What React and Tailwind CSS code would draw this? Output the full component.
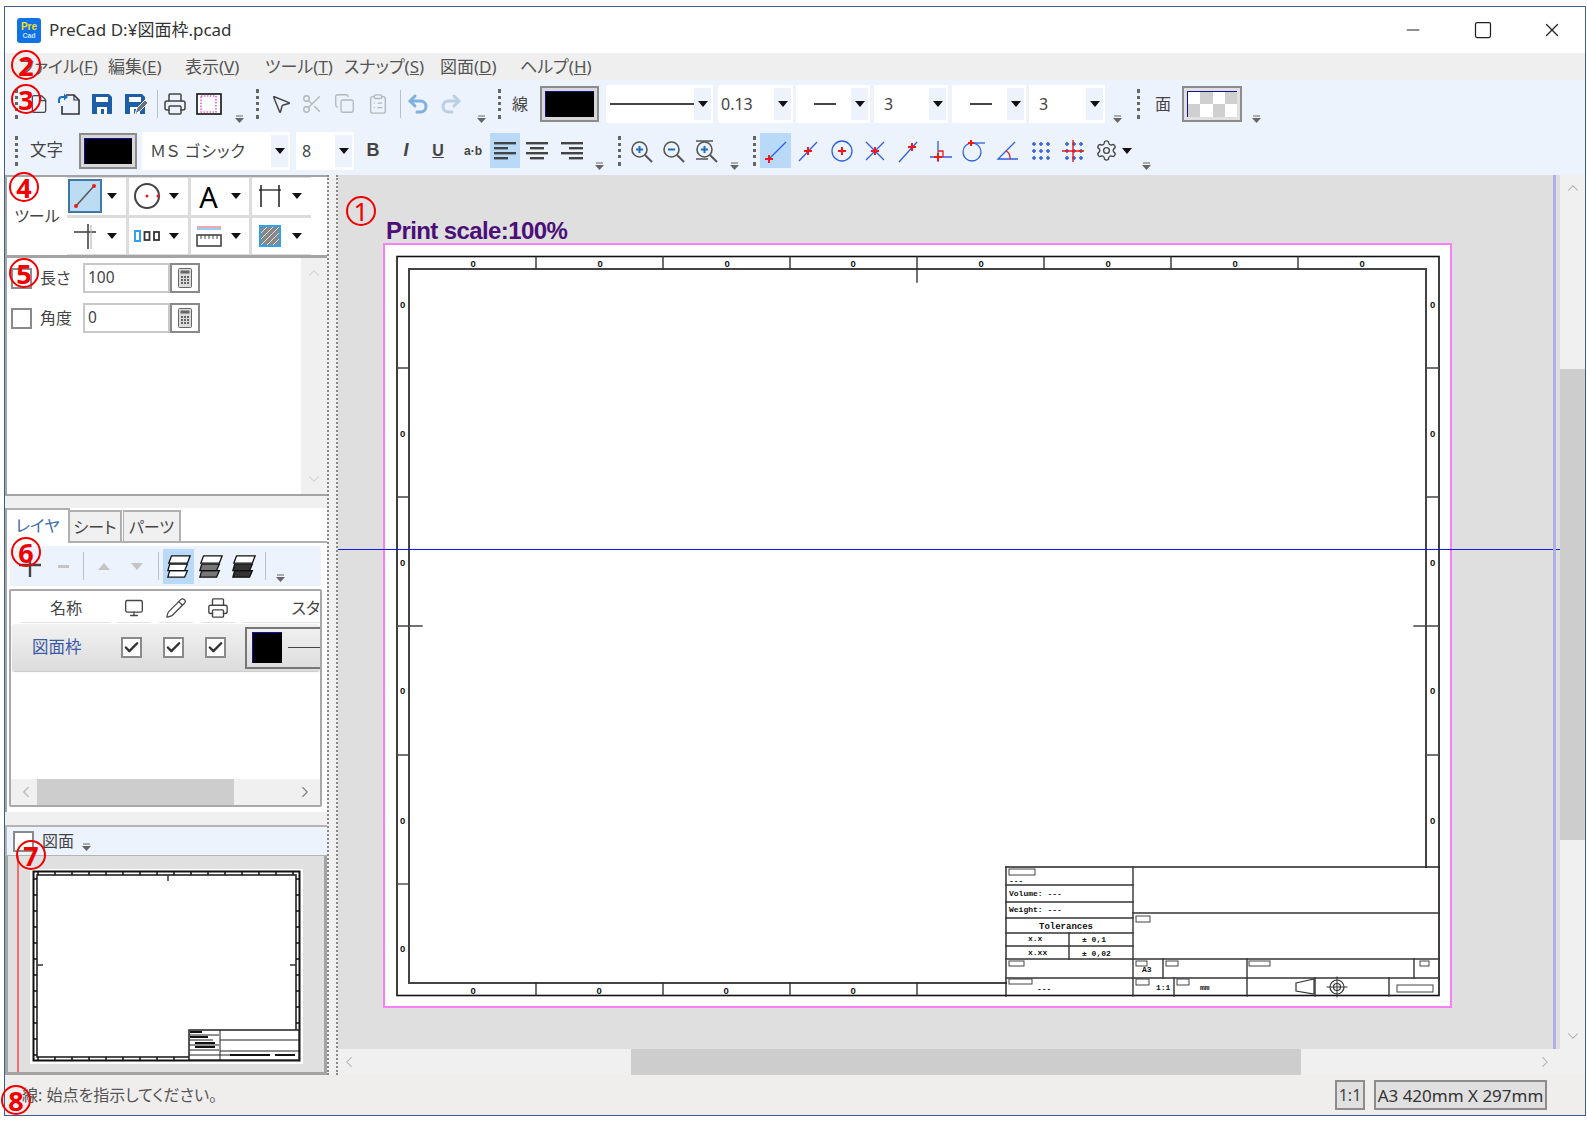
import React from 'react';
import { Printer, Scissors, Copy, ClipboardList, Undo2, Redo2, Settings, Pencil, Monitor, Check, ChevronUp, ChevronDown, ChevronLeft, ChevronRight, MousePointer2, File, X, Minus, Square } from 'lucide-react';

const Grip = ({ className = 'w-[18px]' }) => (
  <div className={`flex h-full items-center justify-center ${className}`}>
    <div className="h-[30px] border-l-[3px] border-dotted border-[#666]" />
  </div>
);

const Sep = ({ className = 'w-[10px]' }) => (
  <div className={`flex h-full items-center justify-center ${className}`}>
    <div className="h-[28px] w-px bg-[#b8c0c8]" />
  </div>
);

// the little "more" handle at the end of each toolbar
const Over = ({ className = 'w-[18px]' }) => (
  <div className={`flex h-full items-end justify-center pb-[4px] ${className}`}>
    <svg width="9" height="8" viewBox="0 0 9 8">
      <path d="M1 1h7" stroke="#666" />
      <path d="M0 3h9L4.5 8z" fill="#666" />
    </svg>
  </div>
);

const Tri = ({ className = '' }) => (
  <svg width="10" height="6" viewBox="0 0 10 6" className={className}>
    <path d="M0 0h10L5 6z" fill="#111" />
  </svg>
);

const Cell = ({ className = 'w-[33px]', children, active }) => (
  <div className={`flex h-full items-center justify-center ${className}`}>
    {active ? <div className="flex h-[35px] w-full items-center justify-center bg-[#b8daf8]">{children}</div> : children}
  </div>
);

const Swatch = ({ className = '', children }) => (
  <div className={`h-[36px] border-2 border-[#8c8c8c] bg-[#d8d8d8] p-[3px] ${className}`}>
    <div className="h-full w-full border-l border-t border-[#1010a0] bg-black">{children}</div>
  </div>
);

const Combo = ({ className = '', children }) => (
  <div className={`flex h-[38px] items-center bg-white pl-[3px] pr-[2px] ${className}`}>
    <div className="min-w-0 flex-1 overflow-hidden whitespace-nowrap text-[16px] leading-[22px] text-[#444]">{children}</div>
    <div className="flex h-[32px] w-[17px] shrink-0 items-center justify-center bg-[#ecf3fc]"><Tri /></div>
  </div>
);

const Dash = ({ w = 'w-[22px]' }) => <div className={`mx-auto h-[2px] bg-[#444] ${w}`} />;

const OpenIcon = () => (
  <svg width="26" height="24" viewBox="0 0 26 24" fill="none">
    <path d="M10 3h8l5 5v14H6v-8" stroke="#333" strokeWidth="1.6" />
    <path d="M18 3v5h5" stroke="#333" strokeWidth="1.2" />
    <path d="M3 11V8a3 3 0 0 1 3-3h4" stroke="#1c6fc0" strokeWidth="2" />
    <path d="M8 1.5l4 3.500-4 3.500z" fill="#1c6fc0" />
  </svg>
);

const FloppyIcon = ({ pen }) => (
  <svg width="24" height="24" viewBox="0 0 24 24">
    <path d="M2 2h17l3 3v17H2z" fill="#1c5fa6" />
    <rect x="6" y="5" width="12" height="5" fill="#fff" />
    <rect x="7" y="15" width="10" height="7" fill="#fff" />
    <rect x="11" y="17" width="3" height="5" fill="#1c5fa6" />
    {pen && <path d="M12 22l2-6 8-8 3 3-8 8z" fill="#6a7280" stroke="#fff" strokeWidth="1" />}
  </svg>
);

const PrintAreaIcon = () => (
  <svg width="26" height="22" viewBox="0 0 26 22">
    <rect x="1" y="1" width="24" height="20" fill="#fff" stroke="#111" strokeWidth="1.6" />
    <rect x="5" y="3" width="15" height="16" fill="none" stroke="#f020d0" strokeWidth="1.2" strokeDasharray="1.5 1.5" />
  </svg>
);

const AlignIcon = ({ mode }) => {
  const rows = [[22, 3], [14, 8], [22, 13], [14, 18]];
  return (
    <svg width="22" height="22" viewBox="0 0 22 22">
      {rows.map(([w, y]) => {
        const x = mode === 'left' ? 0 : mode === 'right' ? 22 - w : (22 - w) / 2;
        return <rect key={y} x={x} y={y - 1} width={w} height="2.4" fill="#444" />;
      })}
    </svg>
  );
};

const ZoomIcon = ({ plus, fit }) => (
  <svg width="24" height="24" viewBox="0 0 24 24" fill="none" stroke="#555" strokeWidth="1.6">
    {fit && <path d="M2 2h17M2 20h12" />}
    <circle cx="10.500" cy="10.500" r="7.500" />
    <path d={plus ? 'M10.500 7v7M7 10.500h7' : 'M7 10.500h7'} stroke="#1c6fc0" strokeWidth="2" />
    <path d="M16 16l7 7" strokeWidth="2" />
  </svg>
);

const B = '#2f5fe0';
const R = '#f01818';
const RedCross = ({ x, y, s = 4 }) => <path d={`M${x - s} ${y}h${s * 2}M${x} ${y - s}v${s * 2}`} stroke={R} strokeWidth="2" />;

const Snap = ({ children }) => (
  <svg width="24" height="26" viewBox="0 0 24 26" fill="none" stroke={B} strokeWidth="1.3">{children}</svg>
);

const dots = [3, 10, 17];
const SnapDots = ({ cross }) => (
  <Snap>
    {dots.map((x) => dots.map((y) => <path key={`${x}-${y}`} d={`M${x + 1} ${y + 3}h4M${x + 3} ${y + 1}v4`} strokeWidth="1.5" stroke={B} />))}
    {cross && <path d="M1 13h22M12 2v22" stroke={R} strokeWidth="1.4" />}
  </Snap>
);

const snapIcons = [
  <Snap key="mid"><path d="M3 23L21 4" /><RedCross x={12} y={13} /></Snap>,
  <Snap key="cen"><circle cx="12" cy="13" r="10" /><RedCross x={12} y={13} /></Snap>,
  <Snap key="int"><path d="M3 4l18 18M21 4L3 22" /><RedCross x={12} y={13} /></Snap>,
  <Snap key="near"><path d="M3 24L21 4" /><RedCross x={16} y={9} /></Snap>,
  <Snap key="perp"><path d="M9 3v21M1 19h22" /><path d="M9 13h5v6" stroke={R} /><RedCross x={9} y={19} /></Snap>,
  <Snap key="tan"><circle cx="10" cy="14" r="9" /><path d="M8 5h15" /><RedCross x={9} y={5} s={3} /></Snap>,
  <Snap key="ang"><path d="M20 4L3 21h20" /><path d="M11 13a8 8 0 0 1 4 8" stroke={R} /></Snap>,
];

const LayerIcon = ({ a, b, c }) => (
  <svg width="26" height="28" viewBox="0 0 28 28" stroke="#111" strokeWidth="1.4">
    <path d="M4 19h19l-3 7H2z" fill={c} />
    <path d="M4 12h19l-3 7H2z" fill={b} />
    <path d="M6 3h20l-3 8H3z" fill={a} />
  </svg>
);

const CalcIcon = () => (
  <svg width="14" height="20" viewBox="0 0 14 20">
    <rect x="0.5" y="0.5" width="13" height="19" rx="1" fill="#dcdcdc" stroke="#666" />
    <rect x="2.5" y="2.5" width="9" height="3" fill="#666" />
    {[8, 11, 14].map((y) => [3, 6, 9].map((x) => <rect key={`${x}-${y}`} x={x} y={y} width="2" height="2" fill="#666" />))}
  </svg>
);

const Checkbox = ({ checked, className = '' }) => (
  <div className={`flex h-[21px] w-[21px] shrink-0 items-center justify-center border-2 border-[#8a8a8a] bg-white ${className}`}>
    {checked && <Check size={17} strokeWidth={3.4} className="text-[#333]" />}
  </div>
);

const Thumb = ({ className = '' }) => <div className={`bg-[#cdcdcd] ${className}`} />;

const ToolCell = ({ icon }) => (
  <div className="flex items-center bg-white">
    <div className="flex h-full w-[36px] items-center justify-center">{icon}</div>
    <Tri className="ml-[4px]" />
  </div>
);

const toolIcons = [
  <div key="line" className="flex h-[34px] w-[34px] shrink-0 items-center justify-center border-2 border-[#3f78a8] bg-[#bcdcf4]">
    <svg width="26" height="26" viewBox="0 0 26 26"><path d="M4 23L22 3" stroke="#555" strokeWidth="1.5" /><circle cx="4" cy="23" r="2" fill={R} /><circle cx="22" cy="3" r="2" fill={R} /></svg>
  </div>,
  <svg key="circ" width="28" height="28" viewBox="0 0 28 28" fill="none"><circle cx="14" cy="14" r="12" stroke="#444" strokeWidth="2" /><circle cx="14" cy="14" r="1.5" fill={R} /><circle cx="25" cy="14" r="1.5" fill={R} /></svg>,
  <span key="a" className="text-[29px] leading-none text-black">A</span>,
  <svg key="dim" width="26" height="26" viewBox="0 0 26 26" fill="none" stroke="#555" strokeWidth="2"><path d="M4 2v22M22 2v22" /><path d="M2 7h22" stroke="#222" strokeWidth="1.3" /></svg>,
  <svg key="lead" width="26" height="26" viewBox="0 0 26 26" fill="none" stroke="#444"><path d="M2 9h22" strokeWidth="1.6" /><path d="M16 1v25" strokeWidth="1.6" /><path d="M19 2v24" stroke="#aaa" /></svg>,
  <svg key="num" width="26" height="14" viewBox="0 0 26 14"><rect x="1" y="2" width="5" height="10" fill="#fff" stroke="#30a0f0" strokeWidth="2" /><rect x="10.500" y="3" width="5" height="8" fill="#fff" stroke="#333" strokeWidth="1.800" /><rect x="20" y="3" width="5" height="8" fill="#fff" stroke="#333" strokeWidth="1.800" /></svg>,
  <svg key="rule" width="26" height="22" viewBox="0 0 26 22" fill="none"><path d="M1 2h24" stroke="#e05060" /><path d="M1 4h24" stroke="#3098e8" /><rect x="1" y="10" width="24" height="11" stroke="#444" strokeWidth="1.6" /><path d="M5 10v4M9 10v4M13 10v4M17 10v4M21 10v4" stroke="#444" /></svg>,
  <svg key="hatch" width="22" height="22" viewBox="0 0 22 22"><rect x="1" y="1" width="20" height="20" fill="#888" stroke="#30a0f0" strokeWidth="2" /><path d="M2 8l6-6M2 14L14 2M2 20L20 2M8 20L20 8M14 20l6-6" stroke="#ddd" /></svg>,
];

// --- drawing sheet, in page coordinates ---
const topTicks = [536, 663, 790, 917, 1044, 1171, 1298];
const topZeros = [473, 600, 727, 853, 981, 1108, 1235, 1362];
const sideTicks = [368, 497, 626, 755, 884];
const sideZeros = [304, 433, 562, 690, 820, 948];
const bottomTicks = [536, 663, 790, 917];
const bottomZeros = [473, 599, 726, 853];

const tiny = { fontFamily: '"Liberation Mono",monospace', fontWeight: 700, fontSize: 8, fill: '#111' };
const zero = { fontFamily: '"Liberation Sans",sans-serif', fontWeight: 700, fontSize: 9.5, fill: '#111' };
const tol = { ...tiny, fontSize: 9 };

const hLines = [
  [1006, 885, 1133], [1006, 902, 1133], [1006, 918, 1133], [1006, 933, 1133], [1006, 946, 1133],
  [1133, 913, 1439], [1006, 959, 1439], [1006, 978, 1439],
];
const vLines = [
  [1133, 867, 996], [1069, 933, 959], [1163, 959, 978], [1247, 959, 996], [1414, 959, 978],
  [1174, 978, 996], [1315, 978, 996], [1389, 978, 996],
];
const smallRects = [
  [1009, 869, 26, 6], [1136, 916, 14, 6], [1009, 961, 15, 5], [1136, 961, 11, 5], [1166, 961, 12, 5],
  [1249, 961, 21, 5], [1420, 961, 9, 5], [1009, 979, 23, 5], [1136, 979, 13, 6], [1177, 979, 12, 6], [1397, 985, 36, 7],
];
const blockTexts = [
  [1009, 883, '---'], [1009, 896, 'Volume: ---'], [1009, 912, 'Weight: ---'],
  [1028, 941, 'x.x'], [1082, 942, '± 0,1'], [1028, 955, 'x.xx'], [1082, 956, '± 0,02'],
  [1142, 972, 'A3'], [1156, 990, '1:1'], [1200, 990, 'mm'], [1037, 991, '---'],
];

const Sheet = () => (
  <svg width="1065" height="761" viewBox="385 245 1065 761" fill="none" className="block" strokeLinecap="square">
    <rect x="397" y="256.500" width="1042" height="739" stroke="#111" strokeWidth="1.6" />
    <path d="M1006 983H409V269H1426V867" stroke="#444" strokeWidth="2" />
    {topTicks.map((x) => <path key={x} d={`M${x} 257V${x === 917 ? 282 : 269}`} stroke="#333" strokeWidth="1.4" />)}
    {bottomTicks.map((x) => <path key={x} d={`M${x} 983V995`} stroke="#333" strokeWidth="1.4" />)}
    {sideTicks.map((y) => (
      <path key={y} d={y === 626 ? `M397 ${y}H422M1414 ${y}H1439` : y > 867 ? `M397 ${y}H409` : `M397 ${y}H409M1426 ${y}H1439`} stroke="#444" strokeWidth="1.4" />
    ))}
    {topZeros.map((x) => <text key={x} x={x - 2.5} y={267} style={zero}>0</text>)}
    {bottomZeros.map((x) => <text key={x} x={x - 2.5} y={994} style={zero}>0</text>)}
    {sideZeros.map((y) => <text key={y} x={400} y={y + 3.5} style={zero}>0</text>)}
    {sideZeros.slice(0, 5).map((y) => <text key={y} x={1430} y={y + 3.5} style={zero}>0</text>)}
    <path d="M1006 867H1439" stroke="#222" strokeWidth="1.4" />
    <path d="M1006 867V996" stroke="#222" strokeWidth="1.4" />
    {hLines.map(([a, y, b]) => <path key={`${a}-${y}`} d={`M${a} ${y}H${b}`} stroke="#333" strokeWidth="1.4" />)}
    {vLines.map(([x, a, b]) => <path key={`${x}-${a}`} d={`M${x} ${a}V${b}`} stroke="#333" strokeWidth="1.4" />)}
    {smallRects.map(([x, y, w, h]) => <rect key={`${x}-${y}`} x={x} y={y} width={w} height={h} stroke="#444" />)}
    {blockTexts.map(([x, y, t]) => <text key={t + x} x={x} y={y} style={tiny}>{t}</text>)}
    <text x={1039} y={929} style={tol}>Tolerances</text>
    <path d="M1296 983L1314 979V994L1296 991Z" stroke="#333" strokeWidth="1.2" />
    <circle cx="1337" cy="987" r="7" stroke="#333" strokeWidth="1.2" />
    <circle cx="1337" cy="987" r="3.500" stroke="#333" strokeWidth="1.2" />
    <path d="M1327 987H1347M1337 977V997" stroke="#333" />
  </svg>
);

const miniTicks = [0, 1, 2, 3, 4, 5, 6, 7, 8, 9, 10, 11, 12, 13, 14, 15];

const MiniSheet = () => (
  <svg width="273" height="195" viewBox="0 0 273 195" fill="none" className="block">
    <rect x="3.500" y="2.500" width="266" height="189" stroke="#111" strokeWidth="2" />
    <rect x="7" y="6" width="259" height="182" stroke="#222" strokeWidth="1.600" />
    {miniTicks.map((i) => <path key={i} d={`M${8 + i * 17} 2v4M${8 + i * 17} 188v4`} stroke="#111" strokeWidth="1.500" />)}
    {miniTicks.slice(0, 12).map((i) => <path key={i} d={`M3 ${10 + i * 16}h4M266 ${10 + i * 16}h4`} stroke="#111" strokeWidth="1.500" />)}
    <path d="M138 6v6M7 96h6M260 96h6" stroke="#333" strokeWidth="1.500" />
    <rect x="159" y="161" width="110" height="30" fill="#fff" stroke="#222" strokeWidth="1.500" />
    <path d="M190 161v30M190 171h79M190 182h79M159 166h30M159 171h24M159 176h30M159 181h30M159 186h79" stroke="#222" />
    <path d="M160 163h12M160 168h18M165 174h20M165 178h20M200 186h40M245 186h20" stroke="#111" strokeWidth="2" />
  </svg>
);

const Mark = ({ className = '', children }) => (
  <div className={`absolute flex h-[30px] w-[30px] items-center justify-center rounded-full border-2 border-[#f00000] text-[27px] font-bold leading-none text-[#f00000] ${className}`}>
    {children}
  </div>
);

const menus = [
  ['ファイル', 'F', 'w-[103px] pl-[15px]'],
  ['編集', 'E', 'w-[77px]'],
  ['表示', 'V', 'w-[80px]'],
  ['ツール', 'T', 'w-[79px]'],
  ['スナップ', 'S', 'w-[96px]'],
  ['図面', 'D', 'w-[80px]'],
  ['ヘルプ', 'H', 'w-[70px]'],
];

export default function App() {
  return (
    <div className="relative h-[1123px] w-[1587px] overflow-hidden bg-white pl-[4px] pt-[6px] font-['Noto_Sans','Noto_Sans_CJK_JP',sans-serif] [font-feature-settings:'palt']">
      <div className="flex h-[1110px] w-[1582px] flex-col border border-[#3f5f86] bg-white">
        {/* Title bar */}
        <div className="flex h-[46px] shrink-0 items-center pl-[12px]">
          <div className="flex h-[25px] w-[24px] flex-col items-center justify-center rounded-[3px] bg-[#0f72e6] font-['Liberation_Sans',sans-serif] font-bold leading-none">
            <span className="text-[10px] text-[#f0e020]">Pre</span>
            <span className="text-[7px] text-[#c8e4ff]">Cad</span>
          </div>
          <span className="ml-[8px] text-[17px] text-[#333]">PreCad D:¥図面枠.pcad</span>
          <div className="ml-auto flex items-center">
            <Minus size={20} strokeWidth={1.4} className="mr-[50px] text-[#222]" />
            <Square size={20} strokeWidth={1.5} className="mr-[48px] text-[#222]" />
            <X size={22} strokeWidth={1.3} className="mr-[22px] text-[#222]" />
          </div>
        </div>

        {/* Menu */}
        <div className="flex h-[27px] shrink-0 items-center bg-[#efefef] text-[17px] leading-none text-[#555]">
          {menus.map(([label, key, w]) => (
            <div key={key} className={`shrink-0 whitespace-nowrap ${w}`}>
              {label}(<u>{key}</u>)
            </div>
          ))}
        </div>

        {/* Toolbars */}
        <div className="h-[95px] shrink-0 bg-[#ecf3fc] text-[#444]">
          <div className="flex h-[47px] items-center pl-[2px]">
            <Grip />
            <Cell className="w-[27px]"><File size={20} strokeWidth={1.5} /></Cell>
            <Cell className="w-[34px]"><OpenIcon /></Cell>
            <Cell className="w-[32px]"><FloppyIcon /></Cell>
            <Cell className="w-[34px]"><FloppyIcon pen /></Cell>
            <Sep />
            <Cell className="w-[26px]"><Printer size={24} strokeWidth={1.5} /></Cell>
            <Cell className="w-[42px]"><PrintAreaIcon /></Cell>
            <Over />
            <Grip />
            <Cell className="w-[29px]"><MousePointer2 size={22} strokeWidth={1.6} /></Cell>
            <Cell><Scissors size={22} strokeWidth={1.5} className="text-[#b4b8bc]" /></Cell>
            <Cell><Copy size={21} strokeWidth={1.5} className="text-[#b4b8bc]" /></Cell>
            <Cell><ClipboardList size={22} strokeWidth={1.5} className="text-[#b4b8bc]" /></Cell>
            <Sep className="w-[12px]" />
            <Cell className="w-[24px]"><Undo2 size={24} strokeWidth={3} className="text-[#7fb0de]" /></Cell>
            <Cell className="w-[42px]"><Redo2 size={24} strokeWidth={3} className="text-[#b8cfe6]" /></Cell>
            <Over />
            <Grip />
            <Cell className="w-[24px]"><span className="text-[16px]">線</span></Cell>
            <Swatch className="ml-[8px] w-[59px]" />
            <Combo className="ml-[7px] w-[107px]"><Dash w="w-[84px]" /></Combo>
            <Combo className="ml-[5px] w-[75px]">0.13</Combo>
            <Combo className="ml-[3px] w-[74px]"><Dash /></Combo>
            <Combo className="ml-[4px] w-[74px] pl-[10px]">3</Combo>
            <Combo className="ml-[4px] w-[74px]"><Dash /></Combo>
            <Combo className="ml-[3px] w-[76px] pl-[10px]">3</Combo>
            <Over className="ml-[4px] w-[16px]" />
            <Grip className="ml-[4px] w-[18px]" />
            <Cell className="ml-[4px] w-[24px]"><span className="text-[16px]">面</span></Cell>
            <div className="ml-[7px] h-[36px] w-[60px] border-2 border-[#8c8c8c] bg-[#e0e0e0] p-[3px]">
              <div className="grid h-full w-full grid-cols-4 grid-rows-2 border-l border-t border-[#1010a0]">
                <div className="bg-white" /><div className="bg-[#cfcfcf]" /><div className="bg-white" /><div className="bg-[#cfcfcf]" />
                <div className="bg-[#cfcfcf]" /><div className="bg-white" /><div className="bg-[#cfcfcf]" /><div className="bg-white" />
              </div>
            </div>
            <Over className="ml-[6px] w-[16px]" />
          </div>
          <div className="flex h-[47px] items-center pl-[2px]">
            <Grip />
            <span className="ml-[5px] w-[36px] text-[16.5px] leading-none">文字</span>
            <Swatch className="ml-[13px] w-[58px]" />
            <Combo className="ml-[5px] w-[148px] pl-[8px]"><span className="tracking-[1px]">ＭＳ ゴシック</span></Combo>
            <Combo className="ml-[6px] w-[58px] pl-[6px]">8</Combo>
            <Cell className="w-[38px]"><span className="font-['Liberation_Sans',sans-serif] text-[18px] font-bold">B</span></Cell>
            <Cell className="w-[28px]"><span className="font-['Liberation_Sans',sans-serif] text-[18px] font-bold italic">I</span></Cell>
            <Cell className="w-[36px]"><span className="font-['Liberation_Sans',sans-serif] text-[16px] font-bold underline">U</span></Cell>
            <Cell className="w-[34px]"><span className="font-['Liberation_Sans',sans-serif] text-[12px] font-bold">a·b</span></Cell>
            <Cell className="w-[30px]" active><AlignIcon mode="left" /></Cell>
            <Cell className="w-[34px]"><AlignIcon mode="center" /></Cell>
            <Cell className="w-[36px]"><AlignIcon mode="right" /></Cell>
            <Over />
            <Grip className="ml-[2px] w-[18px]" />
            <Cell className="w-[26px]"><ZoomIcon plus /></Cell>
            <Cell className="w-[38px]"><ZoomIcon /></Cell>
            <Cell className="w-[28px]"><ZoomIcon plus fit /></Cell>
            <Over className="w-[28px]" />
            <Grip className="w-[12px]" />
            <Cell className="w-[31px]" active>
              <Snap><path d="M22 4L4 22" /><RedCross x={5} y={21} /></Snap>
            </Cell>
            <Cell className="w-[34px]">{snapIcons[0]}</Cell>
            <Cell>{snapIcons[1]}</Cell>
            <Cell className="w-[34px]">{snapIcons[2]}</Cell>
            <Cell className="w-[32px]">{snapIcons[3]}</Cell>
            <Cell>{snapIcons[4]}</Cell>
            <Cell>{snapIcons[5]}</Cell>
            <Cell>{snapIcons[6]}</Cell>
            <Cell><SnapDots /></Cell>
            <Cell className="w-[34px]"><SnapDots cross /></Cell>
            <Cell className="w-[32px]"><Settings size={23} strokeWidth={1.4} /></Cell>
            <Cell className="w-[10px]"><Tri /></Cell>
            <Over className="w-[28px]" />
          </div>
        </div>

        {/* Body */}
        <div className="flex min-h-0 flex-1">
          {/* Left dock */}
          <div className="flex w-[322px] shrink-0 flex-col bg-[#f0f0f0] text-[#444]">
            {/* Tools */}
            <div className="flex h-[83px] shrink-0 border-b-[3px] border-l-2 border-t-2 border-[#a4a4a4] bg-white">
              <div className="flex w-[60px] shrink-0 items-center justify-center text-[16px] leading-none">ツール</div>
              <div className="grid w-[244px] grid-cols-4 grid-rows-2 gap-[3px] bg-[#dcdcdc] py-[1px]">
                {toolIcons.map((icon) => <ToolCell key={icon.key} icon={icon} />)}
              </div>
            </div>

            {/* Properties */}
            <div className="flex h-[238px] shrink-0 border-b-2 border-l-2 border-[#a4a4a4] bg-white">
              <div className="flex flex-1 flex-col gap-[10px] pl-[4px] pt-[5px]">
                {[['長さ', '100'], ['角度', '0']].map(([label, value]) => (
                  <div key={label} className="flex h-[30px] items-center">
                    <Checkbox />
                    <span className="ml-[8px] w-[43px] text-[16px] leading-none">{label}</span>
                    <div className="flex h-[30px] w-[87px] items-center border-2 border-[#c8c8c8] pl-[3px] text-[15.5px] leading-none">{value}</div>
                    <div className="flex h-[30px] w-[30px] items-center justify-center border-2 border-[#8a8a8a]"><CalcIcon /></div>
                  </div>
                ))}
              </div>
              <div className="flex w-[26px] flex-col items-center justify-between bg-[#f0f0f0] py-[6px]">
                <ChevronUp size={18} strokeWidth={1.4} className="text-[#cfcfcf]" />
                <ChevronDown size={18} strokeWidth={1.4} className="text-[#cfcfcf]" />
              </div>
            </div>

            <div className="h-[12px] shrink-0" />

            {/* Layers */}
            <div className="flex h-[304px] shrink-0 flex-col border-l-2 border-[#a4a4a4] bg-white">
              <div className="flex h-[35px] shrink-0 items-end border-b-2 border-[#b0b0b0]">
                <div className="mb-[-2px] flex h-[35px] w-[63px] items-center justify-center border-r-2 border-t-2 border-[#b0b0b0] bg-white text-[16.5px] leading-none text-[#3c6ea8]">レイヤ</div>
                <div className="flex h-[31px] w-[52px] items-center justify-center border-r-2 border-t-2 border-[#b0b0b0] bg-[#f0f0f0] text-[16px] leading-none">シート</div>
                <div className="ml-[1px] flex h-[31px] w-[58px] items-center justify-center border-l border-r-2 border-t-2 border-[#b0b0b0] bg-[#f0f0f0] text-[16px] leading-none">パーツ</div>
              </div>
              <div className="ml-[3px] mt-[3px] flex h-[40px] w-[311px] shrink-0 items-center bg-[#ecf3fc]">
                <Cell className="w-[39px]"><svg width="22" height="22" viewBox="0 0 22 22"><path d="M0 10h22M11 0v22" stroke="#444" strokeWidth="2.4" /></svg></Cell>
                <Cell className="w-[29px]"><div className="h-[3px] w-[11px] bg-[#c4c4c4]" /></Cell>
                <Sep className="w-[11px]" />
                <Cell className="w-[30px]"><svg width="12" height="7" viewBox="0 0 12 7"><path d="M0 7h12L6 0z" fill="#c4c4c4" /></svg></Cell>
                <Cell className="w-[35px]"><svg width="12" height="7" viewBox="0 0 12 7"><path d="M0 0h12L6 7z" fill="#c4c4c4" /></svg></Cell>
                <Sep className="w-[9px]" />
                <Cell className="w-[31px]" active><LayerIcon a="#fff" b="#fff" c="#fff" /></Cell>
                <Cell className="w-[34px]"><LayerIcon a="#fff" b="#777" c="#777" /></Cell>
                <Cell className="w-[32px]"><LayerIcon a="#fff" b="#333" c="#333" /></Cell>
                <Sep className="w-[10px]" />
                <Over className="w-[20px]" />
              </div>
              <div className="ml-[2px] mt-[3px] flex h-[218px] w-[313px] shrink-0 flex-col overflow-hidden rounded-[2px] border-2 border-[#a8a8a8]">
                <div className="flex h-[33px] shrink-0 items-center pt-[2px] text-[16px] leading-none">
                  <div className="ml-[10px] flex h-[29px] w-[90px] items-center justify-center border-b border-[#e4e4e4]">名称</div>
                  <div className="ml-[6px] flex h-[29px] w-[34px] items-center justify-center border-b border-[#e4e4e4]"><Monitor size={20} strokeWidth={1.6} /></div>
                  <div className="ml-[8px] flex h-[29px] w-[34px] items-center justify-center border-b border-[#e4e4e4]"><Pencil size={22} strokeWidth={1.3} /></div>
                  <div className="ml-[8px] flex h-[29px] w-[34px] items-center justify-center border-b border-[#e4e4e4]"><Printer size={22} strokeWidth={1.5} /></div>
                  <div className="ml-[7px] flex h-[29px] flex-1 items-center justify-end overflow-hidden border-b border-[#e4e4e4] whitespace-nowrap">スタ</div>
                </div>
                <div className="ml-px flex h-[47px] shrink-0 items-center rounded-[3px] bg-gradient-to-b from-[#f2f2f2] to-[#dcdcdc] shadow-[0_1px_1px_#c8c8c8]">
                  <span className="ml-[20px] w-[89px] text-[16.5px] leading-none text-[#3a5aa6]">図面枠</span>
                  <Checkbox checked />
                  <Checkbox checked className="ml-[21px]" />
                  <Checkbox checked className="ml-[21px]" />
                  <div className="ml-[19px] flex h-[42px] flex-1 items-center border-y-2 border-l-2 border-[#777] pl-[5px]">
                    <div className="h-[31px] w-[30px] shrink-0 border-l border-t border-[#1010a0] bg-black" />
                    <div className="ml-[6px] h-[1.5px] flex-1 bg-[#444]" />
                  </div>
                </div>
                <div className="flex-1" />
                <div className="flex h-[26px] shrink-0 items-center bg-[#f0f0f0]">
                  <ChevronLeft size={18} strokeWidth={1.5} className="ml-[4px] w-[22px] text-[#b4b4b4]" />
                  <Thumb className="h-full w-[197px]" />
                  <ChevronRight size={18} strokeWidth={1.5} className="ml-auto mr-[6px] text-[#808080]" />
                </div>
              </div>
            </div>

            <div className="h-[13px] shrink-0" />

            {/* Overview */}
            <div className="flex h-[31px] shrink-0 items-center border-l-2 border-t-2 border-b border-[#b4b4b4] bg-[#ecf3fc] pl-[6px]">
              <Checkbox />
              <span className="ml-[8px] text-[16px] leading-none">図面</span>
              <Over className="ml-[4px] w-[16px]" />
            </div>
            <div className="relative flex min-h-0 flex-1 justify-end border-b-[3px] border-l-[3px] border-r-[3px] border-[#a4a4a4] bg-[#e0e0e0] pr-[21px] pt-[13px]">
              <div className="absolute bottom-0 left-[9px] top-0 w-[2px] bg-[#f07070]" />
              <div className="h-[195px] w-[273px] bg-white"><MiniSheet /></div>
            </div>
          </div>

          {/* Splitter */}
          <div className="flex w-[11px] shrink-0 justify-between bg-[#f0f0f0]">
            <div className="h-full border-l-2 border-dotted border-[#888]" />
            <div className="h-full border-l-2 border-dotted border-[#888]" />
          </div>

          {/* Canvas with scrollbars */}
          <div className="flex min-w-0 flex-1 flex-col">
            <div className="flex min-h-0 flex-1">
              <div className="relative min-w-0 flex-1 overflow-hidden bg-[#dfdfdf] pl-[45px] pt-[41px]">
                <div className="ml-[3px] whitespace-nowrap pt-[3px] font-['Liberation_Sans',sans-serif] text-[24px] font-bold leading-[24px] tracking-[-0.6px] text-[#4c0f78]">Print scale:100%</div>
                <div className="h-[765px] w-[1069px] border-2 border-[#f77ff7] bg-white"><Sheet /></div>
                <div className="absolute left-0 right-0 top-[374px] h-px bg-[#1818f0]" />
                <div className="absolute bottom-0 right-[4px] top-0 w-[3px] bg-[#b0b0e8]" />
              </div>
              <div className="flex w-[25px] shrink-0 flex-col bg-[#f0f0f0]">
                <div className="flex h-[194px] shrink-0 items-start justify-center pt-[4px]"><ChevronUp size={18} strokeWidth={1.4} className="text-[#a8a8a8]" /></div>
                <Thumb className="h-[471px] shrink-0" />
                <div className="flex flex-1 items-end justify-center pb-[4px]"><ChevronDown size={18} strokeWidth={1.4} className="text-[#a8a8a8]" /></div>
              </div>
            </div>
            <div className="flex h-[26px] shrink-0 items-center bg-[#f0f0f0]">
              <ChevronLeft size={18} strokeWidth={1.4} className="ml-[2px] text-[#a8a8a8]" />
              <Thumb className="ml-[273px] h-full w-[670px]" />
              <ChevronRight size={18} strokeWidth={1.4} className="ml-auto mr-[31px] text-[#a8a8a8]" />
            </div>
          </div>
        </div>

        {/* Status bar */}
        <div className="flex h-[40px] shrink-0 items-center bg-[#f0eded] pl-[17px] text-[16px] leading-none text-[#555]">
          <span>線: 始点を指示してください。</span>
          <div className="ml-auto flex h-[30px] w-[30px] items-center justify-center border-2 border-[#8c8c8c] bg-[#e0e0e0] text-[#444]">1:1</div>
          <div className="ml-[9px] mr-[38px] flex h-[30px] w-[173px] items-center justify-center whitespace-nowrap border-2 border-[#8c8c8c] bg-[#e0e0e0] text-[17px] text-[#333]">A3 420mm X 297mm</div>
        </div>
      </div>

      {/* Callout numbers laid over the screenshot */}
      <div className="absolute left-[346px] top-[196px] flex h-[30px] w-[30px] items-center justify-center rounded-full border-2 border-[#f00000] text-[26px] leading-none text-[#f00000]">1</div>
      <Mark className="left-[11px] top-[50px]">2</Mark>
      <Mark className="left-[11px] top-[84px]">3</Mark>
      <Mark className="left-[9px] top-[172px]">4</Mark>
      <Mark className="left-[9px] top-[258px]">5</Mark>
      <Mark className="left-[11px] top-[537px]">6</Mark>
      <Mark className="left-[16px] top-[840px]">7</Mark>
      <Mark className="left-[1px] top-[1085px]">8</Mark>
    </div>
  );
}
